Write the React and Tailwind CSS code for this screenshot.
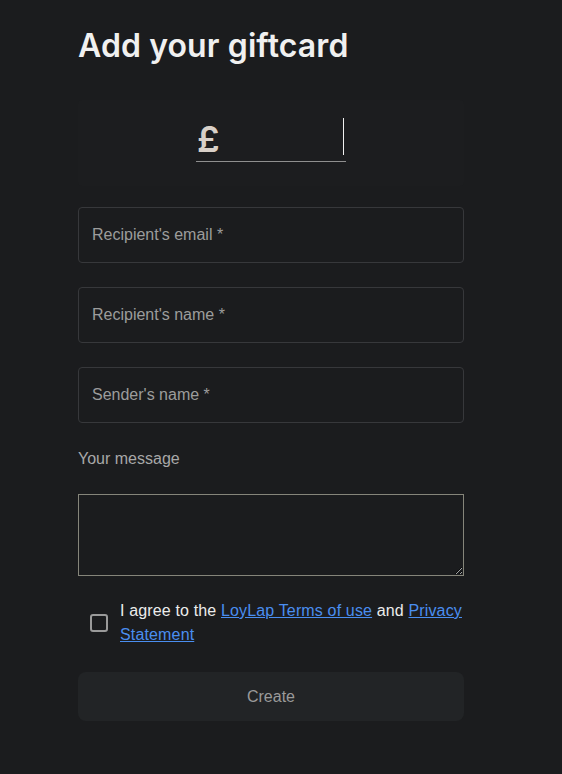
import { useState } from 'react'

export default function App() {
  const [amount, setAmount] = useState('')
  const [agree, setAgree] = useState(false)

  const inputCls =
    'w-full h-[56px] px-[13px] rounded-[4px] bg-[#1b1c1e] border border-[#37383b] text-[16px] text-[#e5e5e5] placeholder-[#9c9c9c] focus:outline-none'

  return (
    <div className="min-h-[774px] bg-[#1b1c1e] overflow-hidden font-['Liberation_Sans',Arial,sans-serif]">
      <div className="w-[386px] ml-[78px] pt-[26px]">
        <h1 className="font-['Inter',sans-serif] font-semibold text-[32px] leading-[40px] tracking-[0.1px] text-[#f0f0f0]">
          Add your giftcard
        </h1>

        {/* Amount */}
        <div className="mt-[34px] h-[86px] bg-[#1c1d1f] rounded-[4px] flex items-start justify-center pt-[16px]">
          <div className="w-[150px] h-[46px] border-b border-[#8f8f8f] flex items-center relative">
            <span className="font-['Inter',sans-serif] font-semibold text-[36px] leading-none text-[#d8d0c8] ml-[1px]">£</span>
            <input
              value={amount}
              onChange={(e) => setAmount(e.target.value)}
              className="w-0 min-w-0 flex-1 bg-transparent text-[30px] text-[#e5e5e5] focus:outline-none"
            />
            <span className="absolute right-[2px] top-[2px] w-[1px] h-[37px] bg-[#f0f0f0]" />
          </div>
        </div>

        <div className="mt-[21px] flex flex-col gap-[24px]">
          <input className={inputCls} placeholder="Recipient's email *" />
          <input className={inputCls} placeholder="Recipient's name *" />
          <input className={inputCls} placeholder="Sender's name *" />
        </div>

        <p className="mt-[26px] text-[16px] leading-[20px] text-[#a8a8a8]">Your message</p>

        <textarea className="mt-[25px] block w-full h-[82px] bg-[#1b1c1e] border border-[#85857a] text-[#e5e5e5] focus:outline-none" />

        <div className="mt-[23px] flex items-start gap-[12px] pl-[12px]">
          <button
            onClick={() => setAgree(!agree)}
            className="mt-[15px] shrink-0 w-[18px] h-[18px] rounded-[3px] border-2 border-[#9a9a9a] flex items-center justify-center"
          >
            {agree && <span className="w-[8px] h-[8px] bg-[#9a9a9a]" />}
          </button>
          <p className="text-[16px] leading-[24px] tracking-[0.15px] text-[#ececec]">
            I agree to the{' '}
            <a href="#" className="text-[#4a8ef0] underline">LoyLap Terms of use</a>{' '}
            and{' '}
            <a href="#" className="text-[#4a8ef0] underline">Privacy Statement</a>
          </p>
        </div>

        <button className="mt-[25px] w-full h-[49px] rounded-[8px] bg-[#222426] text-[16px] text-[#9a9a9a]">
          Create
        </button>
      </div>
    </div>
  )
}
